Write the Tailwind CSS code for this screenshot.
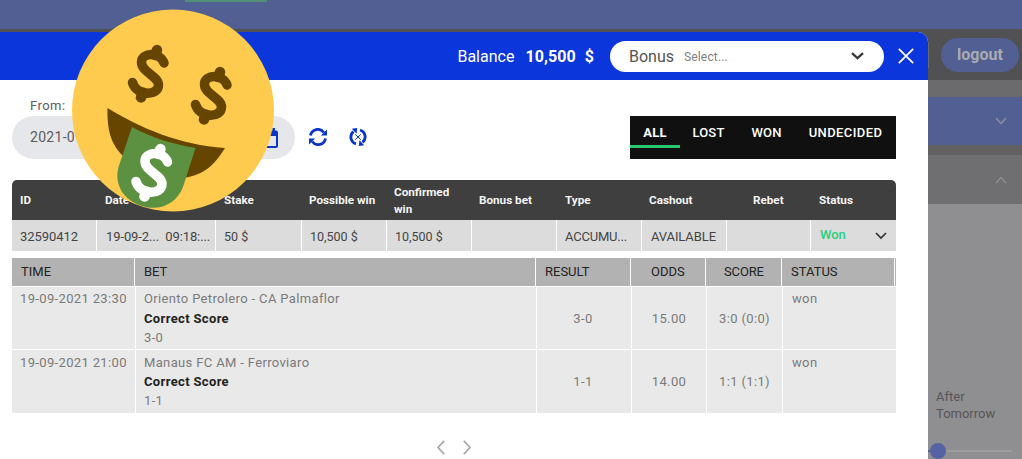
<!DOCTYPE html>
<html lang="en">

<head>
  <meta charset="UTF-8" />
  <meta name="viewport" content="width=device-width, initial-scale=1.0" />
  <title>Bet history</title>
  <script src="https://cdn.jsdelivr.net/npm/@tailwindcss/browser@4"></script>
</head>

<body class="relative w-[1022px] h-[459px] overflow-hidden bg-[#8f8f91] font-['Roboto',sans-serif] text-[13px]">

  <!-- Dimmed page behind the dialog -->
  <div class="h-[29px] bg-[#515f92]">
    <div class="ml-[185px] w-[82px] h-[2px] bg-[#518f76]"></div>
  </div>
  <div class="h-[51px] bg-[#515153] flex justify-end pt-[9px] pr-[3px]">
    <div class="mt-[4px] mr-[12px] w-[2px] h-[26px] bg-[#6a6a72]"></div>
    <div class="w-[78px] h-[34px] rounded-full bg-[#515f92] text-[#a9abb3] text-[16px] font-bold text-center leading-[33px]">logout</div>
  </div>
  <div class="flex justify-end">
    <div class="w-[95px] h-[379px] flex flex-col">
      <div class="h-[17px] bg-[#6b6b6d]"></div>
      <div class="h-[50px] bg-[#515f92] flex items-center justify-end pr-[15px]">
        <svg class="w-3 h-2" viewBox="0 0 12 8" fill="none" stroke="#8e929c" stroke-width="1.5"><path d="M1 1l5 5.5L11 1" /></svg>
      </div>
      <div class="h-[10px] bg-[#606062]"></div>
      <div class="h-[50px] bg-[#6f6f71] flex items-center justify-end pr-[15px]">
        <svg class="w-3 h-2" viewBox="0 0 12 8" fill="none" stroke="#8e8e90" stroke-width="1.5"><path d="M1 7l5-5.5L11 7" /></svg>
      </div>
      <div class="flex-1 pt-[184px] pl-[9px] text-[#555557] leading-[17.5px]">
        After<br />Tomorrow
        <div class="mt-[20px] -ml-[9px] flex items-center">
          <div class="w-[3px] h-[2px] bg-[#515f92]"></div>
          <div class="w-4 h-4 rounded-full bg-[#5563a3]"></div>
          <div class="w-[66px] h-[2px] bg-[#9c9c9e]"></div>
        </div>
      </div>
    </div>
  </div>

  <!-- Dialog -->
  <div class="absolute left-0 top-[32px] w-[928px] h-[427px] bg-white rounded-tr-[10px] overflow-hidden">
    <div class="h-[48px] bg-[#0a36db] flex items-center justify-end pr-[14px] text-white">
      <span class="pt-px text-[16px]">Balance</span>
      <span class="ml-[11px] pt-px text-[16px] font-bold tracking-[0.1px]">10,500</span>
      <span class="ml-[9px] mr-[16px] pt-px text-[16px] font-bold">$</span>
      <div class="w-[274px] h-[31px] rounded-full bg-white flex items-center pl-[19px] pr-[20px] text-[#555]">
        <span class="pt-px text-[16px]">Bonus</span>
        <span class="ml-[10px] pt-px text-[12px] tracking-[0.15px] text-[#808080]">Select...</span>
        <svg class="ml-auto w-[13px] h-2" viewBox="0 0 13 8" fill="none" stroke="#3c3c3c" stroke-width="2.3"><path d="M1 1.2l5.5 5L12 1.2" /></svg>
      </div>
      <svg class="ml-[14px] w-4 h-4" viewBox="0 0 16 16" fill="none" stroke="#fff" stroke-width="1.8"><path d="M.8.8l14.4 14.4M15.2.8L.8 15.2" /></svg>
    </div>

    <div class="h-[100px] flex pl-[12px] pr-[32px]">
      <div class="w-[283px] pt-[17px] text-[#5c5c5c]">
        <div class="h-[19px] pl-[18px] leading-[18px] tracking-[0.45px]">From:</div>
        <div class="h-[43px] rounded-full bg-[#e6e7ea] flex items-center pl-[18px] pr-[17px] text-[14px] tracking-[0.3px]">
          2021-09-19
          <svg class="ml-auto w-[18px] h-5" viewBox="0 0 18 20"><path d="M2 3.5h14a1 1 0 0 1 1 1V18a1 1 0 0 1-1 1H2a1 1 0 0 1-1-1V4.500a1 1 0 0 1 1-1z" fill="none" stroke="#0a36c8" stroke-width="2" /><path d="M1 3h16v5H1zM3 0h2.500v4H3zM12.500 0H15v4h-2.500z" fill="#0a36c8" /></svg>
        </div>
      </div>
      <div class="flex gap-[22px] pl-[14px] pt-[48px]">
        <svg class="w-[18px] h-[18px]" viewBox="0 0 18 18"><g fill="none" stroke="#0a36c8" stroke-width="2.8"><path d="M1.500 7.600A7.400 7.400 0 0 1 14.800 4.500" /><path d="M16.500 10.400A7.400 7.400 0 0 1 3.200 13.500" /></g><path d="M18 1.500v6.100h-6.200zM0 16.500v-6.100h6.200z" fill="#0a36c8" /></svg>
        <svg class="w-[18px] h-[18px]" viewBox="0 0 18 18"><g fill="none" stroke="#0a36c8" stroke-width="2.8"><path d="M7 15.900A7 7 0 0 1 4.500 3.700" /><path d="M11 2.100A7 7 0 0 1 13.500 14.300" /><path d="M6.200 6.300l5.600 5.400M11.800 6.300l-5.600 5.400" stroke-width="1" /></g><path d="M2.800.8l5.400-.8-.6 5.800zM15.200 17.200l-5.400.8.6-5.800z" fill="#0a36c8" /></svg>
      </div>
      <div class="ml-auto mt-[36px] w-[266px] h-[43px] bg-[#101010] flex text-white font-medium leading-[33px] tracking-[0.2px]">
        <div class="w-[50px] h-[32px] text-center font-bold border-b-[3px] border-[#28c76f]">ALL</div>
        <div class="w-[57px] text-center">LOST</div>
        <div class="w-[59px] text-center">WON</div>
        <div class="w-[99px] text-center tracking-[0.4px]">UNDECIDED</div>
      </div>
    </div>

    <!-- Bet slips -->
    <div class="ml-[12px] w-[884px]">
      <div class="h-[40px] pt-px rounded-t-[5px] bg-[#3f3f3f] text-[#f4f4f4] text-[11.7px] font-bold leading-[17px] grid grid-cols-[85px_119px_85px_85px_85px_86px_84px_84px_86px_85px] items-center *:pl-[8px]">
        <div>ID</div>
        <div>Date</div>
        <div>Stake</div>
        <div class="whitespace-nowrap">Possible win</div>
        <div>Confirmed<br />win</div>
        <div>Bonus bet</div>
        <div>Type</div>
        <div>Cashout</div>
        <div class="translate-x-[20px]">Rebet</div>
        <div>Status</div>
      </div>
      <div class="h-[31px] text-[#444] leading-[33px] grid grid-rows-[31px] grid-cols-[84px_118px_85px_84px_84px_84px_84px_84px_83px_85px] gap-x-px *:bg-[#dcdcdc] *:pl-[8px] *:whitespace-nowrap">
        <div class="tracking-[-0.05px]">32590412</div>
        <div class="pl-[9px]! tracking-[-0.1px]">19-09-2... &nbsp;09:18:...</div>
        <div class="text-[12.5px]">50 $</div>
        <div class="text-[12.5px]">10,500 $</div>
        <div class="text-[12.5px]">10,500 $</div>
        <div></div>
        <div class="tracking-[-0.2px]">ACCUMU...</div>
        <div class="pl-[9px]! tracking-[-0.1px]">AVAILABLE</div>
        <div></div>
        <div class="flex items-center justify-between pl-[9px]! pr-[9px] text-[#28d07d] font-medium"><span class="-mt-[2px]">Won</span>
          <svg class="w-3 h-2" viewBox="0 0 12 8" fill="none" stroke="#333" stroke-width="1.7"><path d="M1 1l5 5 5-5" /></svg>
        </div>
      </div>

      <div class="mt-[7px] h-[28px] text-[#222] leading-[28px] grid grid-cols-[122px_400px_94px_74px_75px_112px_1px] gap-x-px *:bg-[#b2b2b2] *:pl-[9px]">
        <div>TIME</div>
        <div>BET</div>
        <div>RESULT</div>
        <div class="pl-[20px]!">ODDS</div>
        <div class="pl-[18px]! tracking-[-0.15px]">SCORE</div>
        <div class="pl-[9px]!">STATUS</div>
        <div class="pl-0!"></div>
      </div>
      <div class="mt-px grid grid-rows-[62px_63px] grid-cols-[123px_400px_94px_74px_75px_113px] gap-px text-[#7a7a7a] tracking-[0.35px] *:bg-[#e9e9e9]">
        <div class="pl-[8px] pt-[2px]">19-09-2021 23:30</div>
        <div class="pl-[8px] pt-[2px] leading-[19.500px]">Oriento Petrolero - CA Palmaflor<br /><b class="text-[#222]">Correct Score</b><br />3-0</div>
        <div class="flex items-center justify-center pt-px pr-[2px]">3-0</div>
        <div class="flex items-center justify-center pt-px">15.00</div>
        <div class="flex items-center justify-center pt-px">3:0 (0:0)</div>
        <div class="pl-[9px] pt-[2px]">won</div>
        <div class="pl-[8px] pt-[3px]">19-09-2021 21:00</div>
        <div class="pl-[8px] pt-[3px] leading-[19.200px]">Manaus FC AM - Ferroviaro<br /><b class="text-[#222]">Correct Score</b><br />1-1</div>
        <div class="flex items-center justify-center pt-px pr-[2px]">1-1</div>
        <div class="flex items-center justify-center pt-px">14.00</div>
        <div class="flex items-center justify-center pt-px">1:1 (1:1)</div>
        <div class="pl-[9px] pt-[3px]">won</div>
      </div>
    </div>

    <div class="mt-[27px] ml-[437px] flex gap-[18px]">
      <svg class="w-2 h-[15px]" viewBox="0 0 8 15" fill="none" stroke="#aaa" stroke-width="1.7"><path d="M7.200.8L1 7.500l6.200 6.700" /></svg>
      <svg class="w-2 h-[15px]" viewBox="0 0 8 15" fill="none" stroke="#aaa" stroke-width="1.7"><path d="M.8.8L7 7.500.8 14.200" /></svg>
    </div>
  </div>

  <!-- Money face sticker -->
  <svg class="absolute left-[72px] top-[9px] w-[202px] h-[203px]" viewBox="72 9 202 203">
    <defs>
      <g id="dollar" fill="none" stroke-width="9.500" stroke-linecap="round">
        <path d="M164 63C160 52 142 52 141.500 62C141 72 158.500 76 158.500 85C158.500 96 137 97 132.500 82.500" />
        <path d="M157 50l-2 5M141 97.500l2-5" stroke-width="10.500" />
      </g>
    </defs>
    <circle cx="173" cy="110.500" r="101" fill="#ffcb4e" />
    <path d="M107.500 108C140 128 180 145 225 148C213 168 202 174 187 177.500L122 155C111 143 107 131 107.500 108z" fill="#664500" />
    <path d="M132 127C152 138 173 144 195.500 148L183 187C177 203 160 212 142 206C123 200 114 184 118.500 167z" fill="#5c9141" />
    <use href="#dollar" stroke="#664500" />
    <use href="#dollar" x="63" y="22" stroke="#664500" />
    <use href="#dollar" x="3.500" y="99" stroke="#fff" />
  </svg>
</body>

</html>
